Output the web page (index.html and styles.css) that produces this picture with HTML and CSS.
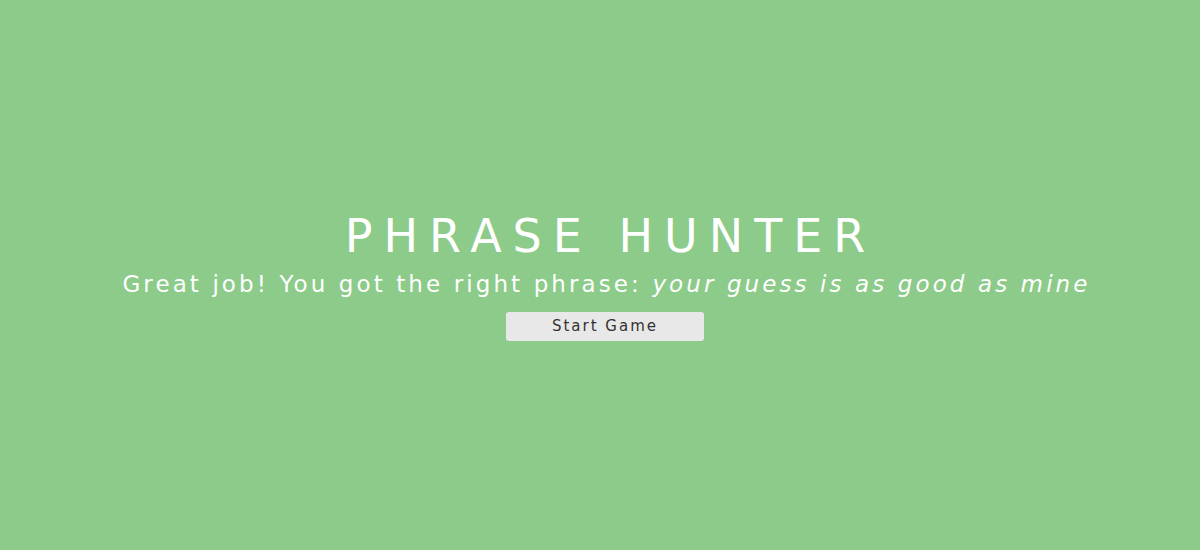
FILE: index.html
```html
<!DOCTYPE html>
<html lang="en">
<head>
<meta charset="utf-8">
<title>Phrase Hunter</title>
<link rel="stylesheet" href="styles.css">
</head>
<body>
<main class="overlay">
  <h1 class="title">PHRASE HUNTER</h1>
  <p class="message">Great job! You got the right phrase: <em class="phrase">your guess is as good as mine</em></p>
  <button class="btn-reset" type="button">Start Game</button>
</main>
</body>
</html>
```
FILE: styles.css
```css
html, body {
  margin: 0;
  padding: 0;
  height: 100%;
}
body {
  background: #8ccb89;
  font-family: "DejaVu Sans", "Open Sans", sans-serif;
  color: #fff;
}
.overlay {
  height: 550px;
  box-sizing: border-box;
  padding-left: 10px;
  display: flex;
  flex-direction: column;
  align-items: center;
  justify-content: center;
  text-align: center;
}
.title {
  margin: -2px 0 0 11px;
  font-size: 46px;
  font-weight: 400;
  line-height: 56px;
  letter-spacing: 11px;
}
.message {
  margin: 0 0 0 3px;
  font-size: 23px;
  line-height: 40px;
  letter-spacing: 3.1px;
}
.phrase {
  font-style: italic;
}
.btn-reset {
  margin-top: 8px;
  width: 198px;
  height: 29px;
  border: none;
  border-radius: 3px;
  background: #e8e8e8;
  color: #333;
  font-family: inherit;
  font-size: 15px;
  letter-spacing: 2px;
  padding: 0;
}
```
